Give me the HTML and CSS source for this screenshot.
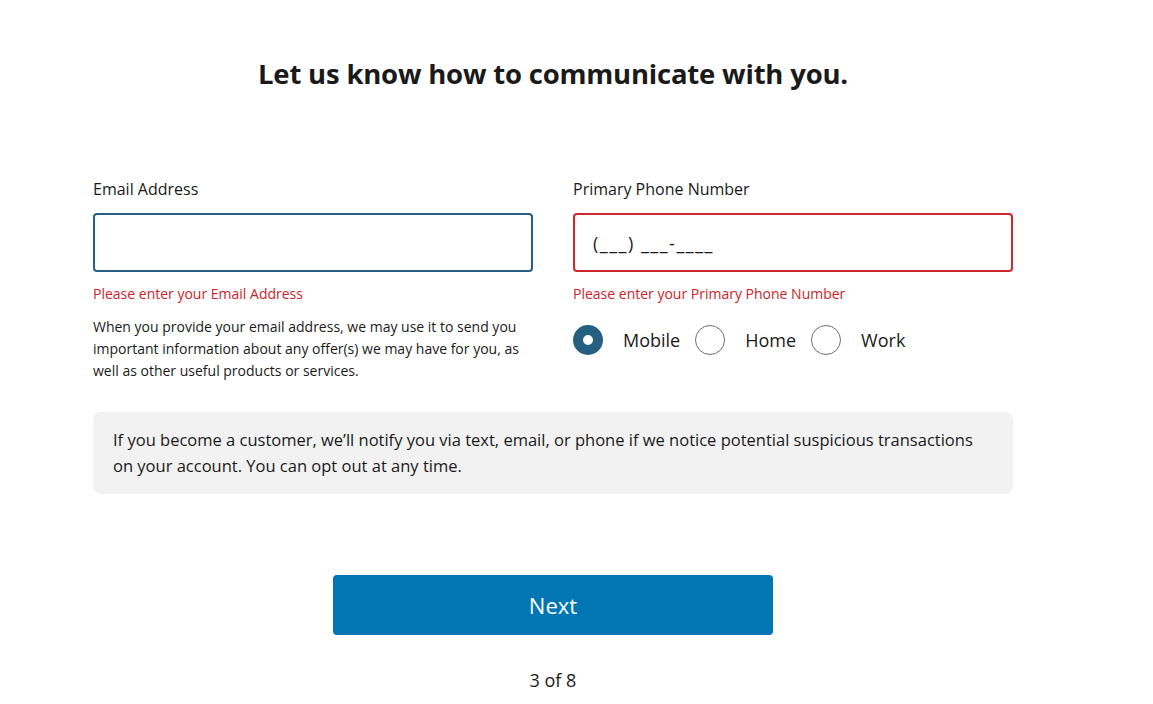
FILE: index.html
```html
<!DOCTYPE html>
<html lang="en">
<head>
    <meta charset="UTF-8">
    <meta name="viewport" content="width=device-width, initial-scale=1.0">
    <title>Contact Preferences</title>
    <link rel="stylesheet" href="styles.css">
</head>
<body>
    <div class="container">
        <h1>Let us know how to communicate with you.</h1>
        <div class="fields">
            <div class="field">
                <label class="field-label" for="email">Email Address</label>
                <input type="text" id="email" class="input-email">
                <p class="error">Please enter your Email Address</p>
                <p class="note">When you provide your email address, we may use it to send you important information about any offer(s) we may have for you, as well as other useful products or services.</p>
            </div>
            <div class="field">
                <label class="field-label" for="phone">Primary Phone Number</label>
                <input type="text" id="phone" class="input-phone" value="(___) ___-____">
                <p class="error">Please enter your Primary Phone Number</p>
                <div class="radios">
                    <div class="radio"><span class="dot checked"></span>Mobile</div>
                    <div class="radio"><span class="dot"></span>Home</div>
                    <div class="radio"><span class="dot"></span>Work</div>
                </div>
            </div>
        </div>
        <div class="info-box">
            If you become a customer, we’ll notify you via text, email, or phone if we notice potential suspicious transactions on your account. You can opt out at any time.
        </div>
        <button class="next">Next</button>
        <p class="step">3 of 8</p>
    </div>
</body>
</html>
```
FILE: styles.css
```css
body {
    margin: 0;
    padding: 0;
    background: #fff;
    font-family: 'Open Sans', 'Noto Sans', sans-serif;
    color: #1a1a1a;
}
.container {
    width: 920px;
    margin-left: 93px;
    padding-top: 54px;
}
h1 {
    margin: 0;
    text-align: center;
    font-size: 27.5px;
    font-weight: 700;
    line-height: 40px;
    letter-spacing: -0.2px;
}
.fields {
    display: grid;
    grid-template-columns: 440px 440px;
    column-gap: 40px;
    margin-top: 84px;
}
.field-label {
    display: block;
    font-size: 16px;
    line-height: 22px;
    margin-bottom: 13px;
}
.field input {
    box-sizing: border-box;
    width: 100%;
    height: 59px;
    border-radius: 4px;
    font-family: inherit;
    font-size: 18px;
    padding: 0 18px;
    outline: none;
    color: #1a1a1a;
}
.input-email {
    border: 2px solid #255f82;
}
.input-phone {
    border: 2px solid #d0262d;
    letter-spacing: 1.5px;
}
.error {
    margin: 12px 0 0;
    font-size: 14px;
    line-height: 20px;
    color: #cc2427;
}
.note {
    margin: 12px 0 0;
    font-size: 14px;
    line-height: 22px;
}
.radios {
    display: flex;
    align-items: center;
    margin-top: 21px;
}
.radio {
    display: flex;
    align-items: center;
    font-size: 18px;
    margin-right: 15px;
}
.dot {
    flex-shrink: 0;
    box-sizing: border-box;
    width: 30px;
    height: 30px;
    border-radius: 50%;
    border: 1px solid #6e6e6e;
    margin-right: 20px;
}
.dot.checked {
    border: 10px solid #255f82;
    background: #fff;
}
.info-box {
    margin-top: 30px;
    background: #f2f2f2;
    border-radius: 8px;
    padding: 15px 20px;
    font-size: 16.5px;
    line-height: 26px;
}
.next {
    display: block;
    width: 440px;
    height: 60px;
    margin: 81px auto 0;
    background: #0276b3;
    color: #fff;
    border: none;
    border-radius: 4px;
    font-family: inherit;
    font-size: 22px;
    font-weight: 500;
}
.step {
    text-align: center;
    font-size: 18px;
    margin: 33px 0 0;
}
```
